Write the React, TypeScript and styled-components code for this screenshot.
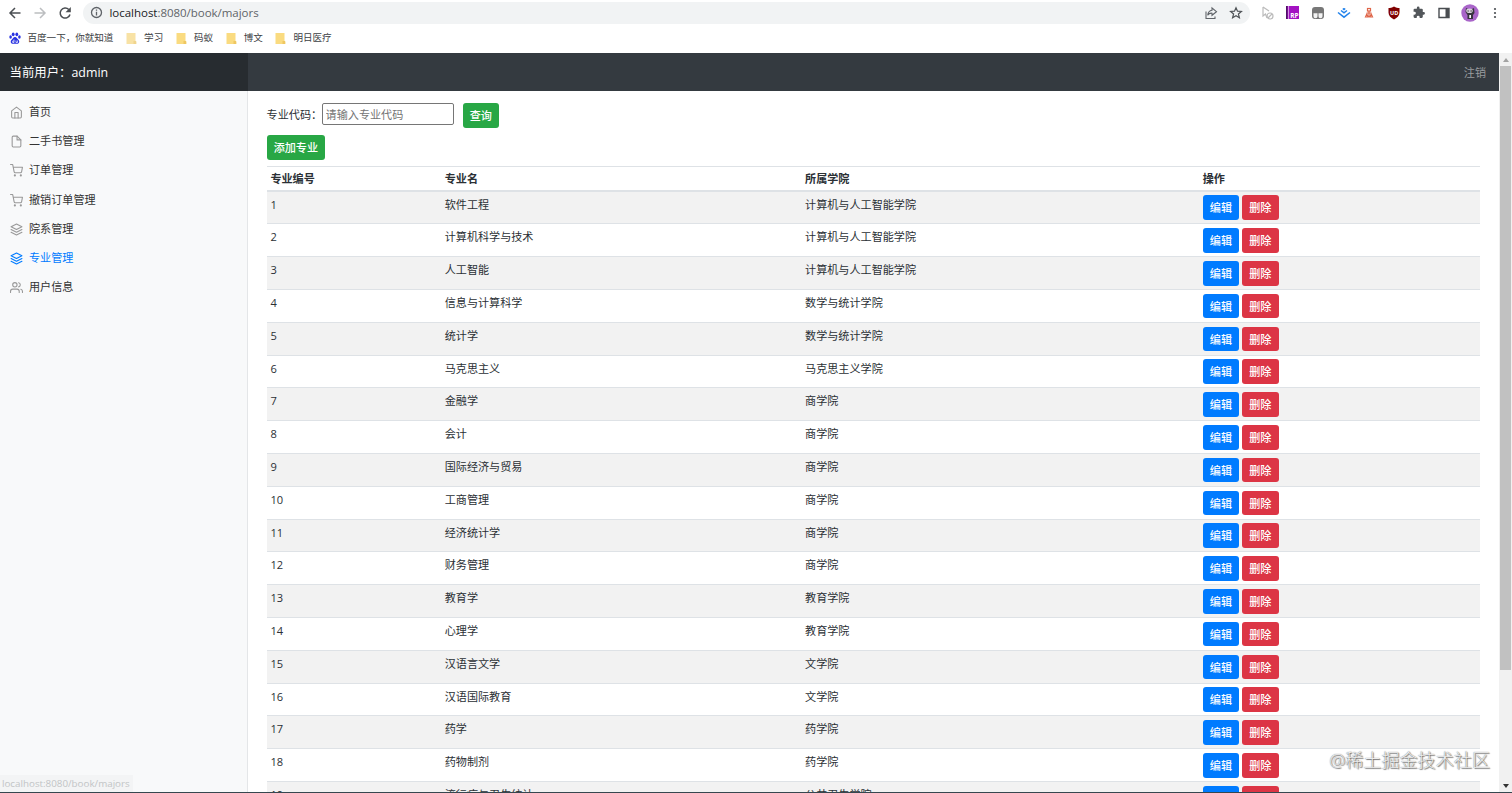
import React from 'react';
import styled, { createGlobalStyle } from 'styled-components';

const Global = createGlobalStyle`
  * { box-sizing: border-box; }
  html, body { margin: 0; padding: 0; overflow: hidden; }
  body {
    font-family: "Open Sans", "Noto Sans CJK SC", sans-serif;
    font-size: 11.1px;
    color: #2b3035;
    background: #fff;
  }
`;

const Window = styled.div`
  position: relative;
  display: flex;
  flex-direction: column;
  width: 1512px;
  height: 793px;
  overflow: hidden;
  border-bottom: 1px solid #36474f;
`;

const AddressRow = styled.div`
  display: flex;
  align-items: center;
  height: 25px;
  flex: none;
  padding-left: 8px;
`;

const NavIcons = styled.div`
  display: flex;
  align-items: center;
  gap: 11px;
  width: 75px;
  flex: none;
`;

const AddressBar = styled.div`
  display: flex;
  align-items: center;
  width: 1167px;
  height: 22px;
  padding: 0 7px 0 7px;
  border-radius: 11px;
  background: #f1f3f4;
  color: #202124;
  font-size: 11.5px;
`;

const Url = styled.span`
  margin-left: 6.5px;
  flex: 1;
  line-height: 20px;
  letter-spacing: -0.03px;
  em { font-style: normal; color: #5f6368; }
`;

const BarIcons = styled.div`
  display: flex;
  align-items: center;
  gap: 11px;
`;

const Extensions = styled.div`
  display: flex;
  align-items: center;
  margin-left: 9px;
  gap: 7.2px;
  svg { flex: none; }
`;

const Bookmarks = styled.div`
  display: flex;
  align-items: center;
  flex: none;
  height: 28px;
  padding-left: 8.5px;
  padding-bottom: 2px;
  gap: 12.7px;
  font-size: 9.55px;
  color: #3c4043;
`;

const Bookmark = styled.div`
  display: flex;
  align-items: center;
  gap: 7px;
  line-height: 14px;
  white-space: nowrap;
`;

const Viewport = styled.div`
  display: flex;
  flex: 1;
  min-height: 0;
`;

const Page = styled.div`
  display: flex;
  flex-direction: column;
  width: 1499px;
`;

const Navbar = styled.header`
  display: flex;
  flex: none;
  height: 38px;
  background: #343a40;
`;

const Brand = styled.div`
  width: 248px;
  padding-left: 9.5px;
  background: #272c30;
  color: #fff;
  font-size: 12.4px;
  line-height: 39px;
`;

const Logout = styled.a`
  margin-left: auto;
  padding-right: 13px;
  color: #999c9f;
  line-height: 39px;
`;

const Body = styled.div`
  display: flex;
  flex: 1;
  min-height: 0;
`;

const Sidebar = styled.nav`
  width: 248px;
  flex: none;
  padding-top: 5.5px;
  background: #f8f9fa;
  border-right: 1px solid #e4e6e8;
`;

const MenuItem = styled.a<{ $active?: boolean }>`
  display: flex;
  align-items: center;
  height: 29.2px;
  padding-left: 10px;
  gap: 6px;
  color: ${p => (p.$active ? '#007bff' : '#333')};
  svg {
    margin-top: 3px;
    color: ${p => (p.$active ? '#007bff' : '#999')};
  }
`;

const Main = styled.main`
  display: flex;
  flex-direction: column;
  flex: 1;
  min-width: 0;
  padding: 12px 19px 0 18.6px;
  overflow: hidden;
`;

const Search = styled.form`
  display: flex;
  height: 26px;
  flex: none;
  label { line-height: 23px; width: 55px; white-space: nowrap; }
`;

const Field = styled.input`
  width: 132px;
  height: 22px;
  margin-right: 9px;
  padding: 0 3px;
  border: 1px solid #767676;
  border-radius: 2px;
  font: inherit;
  &::placeholder { color: #757575; }
`;

const Button = styled.button<{ $tone: string; $width?: number }>`
  width: ${p => p.$width ?? 36.4}px;
  height: 24.6px;
  flex: none;
  padding: 0;
  border: 0;
  border-radius: 3px;
  background: ${p => p.$tone};
  color: #fff;
  font: inherit;
  font-weight: 500;
`;

const AddRow = styled.div`
  padding-top: 6px;
  height: 37px;
  flex: none;
`;

const Row = styled.div<{ $striped?: boolean }>`
  display: grid;
  grid-template-columns: 174.3px 360.4px 397.7px 1fr;
  height: 32.8px;
  flex: none;
  padding-left: 3.8px;
  border-top: 1px solid #dee2e6;
  background: ${p => (p.$striped ? '#f2f2f2' : '#fff')};
  line-height: 25px;
`;

const HeadRow = styled(Row)`
  height: 24.7px;
  font-weight: 700;
  line-height: 23px;
  border-bottom: 1px solid #dee2e6;
`;

const Actions = styled.div`
  display: flex;
  gap: 3px;
  padding-top: 3.7px;
`;

const Scrollbar = styled.div`
  display: flex;
  flex-direction: column;
  align-items: center;
  justify-content: space-between;
  width: 13px;
  background: #f1f1f1;
`;

const Thumb = styled.div`
  width: 11px;
  height: 604px;
  margin-bottom: auto;
  background: #c1c1c1;
`;

const Arrow = styled.div<{ $down?: boolean }>`
  display: flex;
  align-items: center;
  justify-content: center;
  height: 13px;
  &::before {
    content: '';
    border: 3px solid transparent;
    border-top: ${p => (p.$down ? '4px solid #333' : '0')};
    border-bottom: ${p => (p.$down ? '0' : '4px solid #a3a3a3')};
  }
`;

const LinkStatus = styled.div`
  position: absolute;
  left: 0;
  bottom: 0;
  width: 133px;
  height: 17px;
  padding-left: 2px;
  background: #f3f4f5;
  color: #c2c4c6;
  font-size: 9.8px;
  line-height: 17px;
`;

const Watermark = styled.div`
  position: absolute;
  right: 22px;
  bottom: 18px;
  color: rgba(255, 255, 255, 0.9);
  font-size: 18.1px;
  font-weight: 300;
  line-height: 28px;
  text-shadow: 0 0 1px #555, 1px 1px 1px #777;
`;

const majors: [string, string][] = [
  ['软件工程', '计算机与人工智能学院'],
  ['计算机科学与技术', '计算机与人工智能学院'],
  ['人工智能', '计算机与人工智能学院'],
  ['信息与计算科学', '数学与统计学院'],
  ['统计学', '数学与统计学院'],
  ['马克思主义', '马克思主义学院'],
  ['金融学', '商学院'],
  ['会计', '商学院'],
  ['国际经济与贸易', '商学院'],
  ['工商管理', '商学院'],
  ['经济统计学', '商学院'],
  ['财务管理', '商学院'],
  ['教育学', '教育学院'],
  ['心理学', '教育学院'],
  ['汉语言文学', '文学院'],
  ['汉语国际教育', '文学院'],
  ['药学', '药学院'],
  ['药物制剂', '药学院'],
  ['流行病与卫生统计', '公共卫生学院'],
];

const Line = ({ children }: { children: React.ReactNode }) => (
  <svg width="13" height="13" viewBox="0 0 24 24" fill="none" stroke="currentColor" strokeWidth="2" strokeLinecap="round" strokeLinejoin="round">
    {children}
  </svg>
);

const home = <><path d="M3 9l9-7 9 7v11a2 2 0 0 1-2 2H5a2 2 0 0 1-2-2z" /><path d="M9 22V12h6v10" /></>;
const file = <><path d="M13 2H6a2 2 0 0 0-2 2v16a2 2 0 0 0 2 2h12a2 2 0 0 0 2-2V9z" /><path d="M13 2v7h7" /></>;
const cart = <><circle cx="9" cy="21" r="1" /><circle cx="20" cy="21" r="1" /><path d="M1 1h4l2.68 13.39a2 2 0 0 0 2 1.61h9.72a2 2 0 0 0 2-1.61L23 6H6" /></>;
const layers = <><path d="M12 2L2 7l10 5 10-5z" /><path d="M2 17l10 5 10-5" /><path d="M2 12l10 5 10-5" /></>;
const users = <><path d="M17 21v-2a4 4 0 0 0-4-4H5a4 4 0 0 0-4 4v2" /><circle cx="9" cy="7" r="4" /><path d="M23 21v-2a4 4 0 0 0-3-3.87" /><path d="M16 3.13a4 4 0 0 1 0 7.75" /></>;

const menu = [
  { label: '首页', icon: home },
  { label: '二手书管理', icon: file },
  { label: '订单管理', icon: cart },
  { label: '撤销订单管理', icon: cart },
  { label: '院系管理', icon: layers },
  { label: '专业管理', icon: layers, active: true },
  { label: '用户信息', icon: users },
];

const Folder = ({ pale }: { pale?: boolean }) => (
  <svg width="11" height="13" viewBox="0 0 11 13">
    <path d="M.5 1h9v8l1 .5V12H.5z" fill={pale ? '#f8e2a5' : '#fadb80'} />
    <path d="M7.500 9H10v3H7.500z" fill={pale ? '#f0d58e' : '#efc762'} />
  </svg>
);

const ToolbarButtons = () => (
  <NavIcons>
    <svg width="14" height="14" viewBox="0 0 14 14" fill="none" stroke="#4b4f53" strokeWidth="1.5"><path d="M12.5 7H2M7 2L2 7l5 5" /></svg>
    <svg width="14" height="14" viewBox="0 0 14 14" fill="none" stroke="#bcbec0" strokeWidth="1.5"><path d="M1.500 7H12M7 2l5 5-5 5" /></svg>
    <svg width="14" height="14" viewBox="0 0 14 14"><path d="M12 8.500A5 5 0 1 1 10.800 3.600" fill="none" stroke="#4b4f53" strokeWidth="1.5" /><path d="M12.800 1v5.300H7.500z" fill="#4b4f53" /></svg>
  </NavIcons>
);

const ExtensionIcons = () => (
  <Extensions>
    <svg width="18" height="16" viewBox="0 0 18 16" fill="none" stroke="#bbb" strokeWidth="1.200"><path d="M4 2v9l2.500-2 1.500 4M4 2l6 4" /><circle cx="11" cy="11" r="3" /><path d="M9 13l4-4" /></svg>
    <svg width="18" height="16" viewBox="0 0 18 16">
      <path d="M2 1h13v13H2z" fill="#a313c2" /><path d="M2 1h1.500v13H2z" fill="#4d1265" /><path d="M4 1h.8v13H4z" fill="#e3b5eb" />
      <text x="6.300" y="12.500" fontSize="6.500" fontWeight="700" fill="#fff" fontFamily="Open Sans">RP</text>
    </svg>
    <svg width="18" height="16" viewBox="0 0 18 16"><rect x="3" y="2" width="12" height="12" rx="3" fill="#777" /><path d="M4.500 8.300h4v3a2 2 0 0 1-4 0zM9.500 8.300h4v3a2 2 0 0 1-4 0z" fill="#f4f4f4" /></svg>
    <svg width="18" height="16" viewBox="0 0 18 16" fill="none" stroke="#2383eb" strokeWidth="1.500"><path d="M3 7.500l6 4.700 6-4.700M6 5.500l3 2.400 3-2.400" /><path d="M7.800 3.500L9 4.600l1.200-1.100" /></svg>
    <svg width="18" height="16" viewBox="0 0 18 16" fill="none" stroke="#df6548" strokeWidth="1.200"><rect x="7.500" y="3.500" width="3" height="2.500" /><path d="M9 6v6M6.500 8h5M5.500 12l1.300-3 1.300 3zM9.900 12l1.300-3 1.300 3z" /></svg>
    <svg width="18" height="16" viewBox="0 0 18 16"><path d="M9 1.500c2 1.200 3.700 1.500 5.500 1.500v4.500c0 3-2 5.200-5.500 7-3.500-1.800-5.500-4-5.500-7V3C5.300 3 7 2.700 9 1.500z" fill="#800000" /><text x="5" y="9.500" fontSize="5.500" fontWeight="700" fill="#fff" fontFamily="Open Sans">UD</text></svg>
    <svg width="18" height="13" viewBox="0 0 24 24" fill="#53575b"><path d="M20.500 11H19V7a2 2 0 0 0-2-2h-4V3.500a2.500 2.500 0 0 0-5 0V5H4a2 2 0 0 0-2 2v3.800h1.500a2.700 2.700 0 0 1 0 5.400H2V20a2 2 0 0 0 2 2h3.800v-1.500a2.700 2.700 0 0 1 5.400 0V22H17a2 2 0 0 0 2-2v-4h1.500a2.500 2.500 0 0 0 0-5z" /></svg>
    <svg width="18" height="16" viewBox="0 0 18 16"><path d="M4 3.500h10v9H4z" fill="none" stroke="#494d51" strokeWidth="1.400" /><path d="M10.500 3H14v10h-3.500z" fill="#494d51" /></svg>
    <svg width="18" height="18" viewBox="0 0 18 18"><circle cx="9" cy="9" r="8.700" fill="#a965c9" /><path d="M5 4l2 1h4l2-1 .5 5-1.500 2v4H6.500v-4L4.500 8z" fill="#393440" /><ellipse cx="8.500" cy="6.800" rx="3.300" ry="2.300" fill="#d9d0dc" /><path d="M8.300 11h1.700v3H8.300z" fill="#fff" /><path d="M6.500 7h1.300M9.500 7h1.300" stroke="#333" /></svg>
    <svg width="18" height="16" viewBox="0 0 18 16" fill="#4b4f53"><circle cx="9" cy="4" r="1.100" /><circle cx="9" cy="8" r="1.100" /><circle cx="9" cy="12" r="1.100" /></svg>
  </Extensions>
);

export default function App() {
  return (
    <Window>
      <Global />
      <AddressRow>
        <ToolbarButtons />
        <AddressBar>
          <svg width="13" height="13" viewBox="0 0 13 13" fill="none" stroke="#5f6368" strokeWidth="1.300"><circle cx="6.500" cy="6.500" r="5" /><path d="M6.500 5.800V9.500M6.500 3.500v1.200" /></svg>
          <Url>localhost<em>:8080/book/majors</em></Url>
          <BarIcons>
            <svg width="14" height="14" viewBox="0 0 14 14" fill="none" stroke="#5f6368" strokeWidth="1.100"><path d="M2 5.500v7h9v-2M8 2l4.500 3.700L8 9.300V7.200C6 7 4.700 7.600 3.700 9.300 4 6.500 5.500 4.500 8 4.200z" /></svg>
            <svg width="14" height="14" viewBox="0 0 14 14" fill="none" stroke="#4f5357" strokeWidth="1.200"><path d="M7 1.700l1.500 3.500 3.900.3-3 2.500 1 3.800L7 9.700l-3.400 2.100 1-3.800-3-2.500 3.900-.3z" /></svg>
          </BarIcons>
        </AddressBar>
        <ExtensionIcons />
      </AddressRow>
      <Bookmarks>
        <Bookmark>
          <svg width="12" height="12" viewBox="0 0 12 12" fill="#2932e1">
            <ellipse cx="4.200" cy="2.300" rx="1.400" ry="1.900" /><ellipse cx="7.800" cy="2.300" rx="1.400" ry="1.900" /><ellipse cx="1.600" cy="5" rx="1.300" ry="1.700" /><ellipse cx="10.400" cy="5" rx="1.300" ry="1.700" />
            <path d="M6 5c1.700 0 2 1.700 3.300 2.700 1.700 1.400 1 4-1 4-1 0-3.600 0-4.600 0-2 0-2.700-2.600-1-4C4 6.700 4.300 5 6 5z" />
            <path d="M5 7.500v3H3.700V9H5M7 8.500v2h1.500v-2" fill="none" stroke="#fff" strokeWidth=".7" />
          </svg>
          百度一下，你就知道
        </Bookmark>
        <Bookmark><Folder pale />学习</Bookmark>
        <Bookmark><Folder />码蚁</Bookmark>
        <Bookmark><Folder />博文</Bookmark>
        <Bookmark><Folder />明日医疗</Bookmark>
      </Bookmarks>
      <Viewport>
        <Page>
          <Navbar>
            <Brand>当前用户：admin</Brand>
            <Logout>注销</Logout>
          </Navbar>
          <Body>
            <Sidebar>
              {menu.map(item => (
                <MenuItem key={item.label} $active={item.active}>
                  <Line>{item.icon}</Line>
                  {item.label}
                </MenuItem>
              ))}
            </Sidebar>
            <Main>
              <Search>
                <label>专业代码：</label>
                <Field placeholder="请输入专业代码" />
                <Button type="button" $tone="#28a745">查询</Button>
              </Search>
              <AddRow><Button $tone="#28a745" $width={58.5}>添加专业</Button></AddRow>
              <HeadRow>
                <span>专业编号</span><span>专业名</span><span>所属学院</span><span>操作</span>
              </HeadRow>
              {majors.map(([name, college], i) => (
                <Row key={name} $striped={i % 2 === 0}>
                  <span>{i + 1}</span>
                  <span>{name}</span>
                  <span>{college}</span>
                  <Actions>
                    <Button $tone="#007bff">编辑</Button>
                    <Button $tone="#dc3545">删除</Button>
                  </Actions>
                </Row>
              ))}
            </Main>
          </Body>
        </Page>
        <Scrollbar>
          <Arrow />
          <Thumb />
          <Arrow $down />
        </Scrollbar>
      </Viewport>
      <LinkStatus>localhost:8080/book/majors</LinkStatus>
      <Watermark>@稀土掘金技术社区</Watermark>
    </Window>
  );
}
